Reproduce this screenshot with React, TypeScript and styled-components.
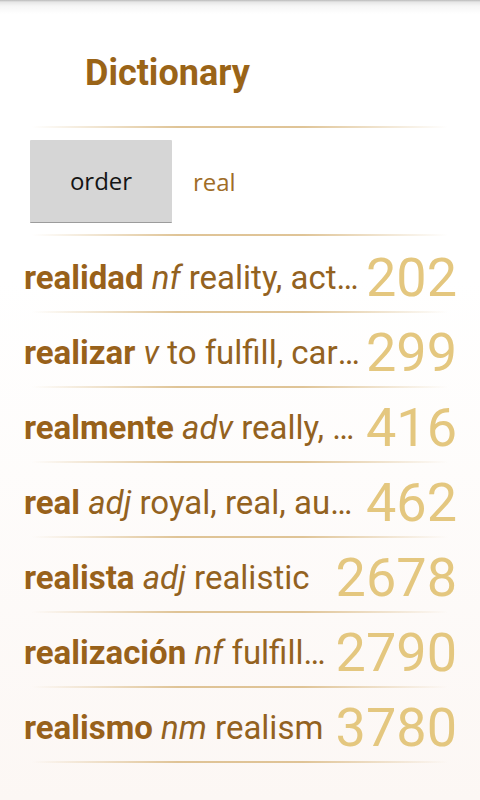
import React from "react";
import styled, { createGlobalStyle } from "styled-components";

const GlobalStyle = createGlobalStyle`
  html, body {
    margin: 0;
    padding: 0;
  }
  body {
    font-family: "Roboto", "Liberation Sans", sans-serif;
  }
`;

const Screen = styled.div`
  min-height: 800px;
  background: linear-gradient(
    to bottom,
    #b9b9b9 0px,
    #e6e6e6 2px,
    #f6f6f6 6px,
    #ffffff 14px,
    #ffffff 35%,
    #fcf7f4 100%
  );
`;

const Header = styled.header`
  height: 126px;
  padding: 19px 0 0 85px;
  box-sizing: border-box;
  display: flex;
  align-items: center;
`;

const Title = styled.h1`
  margin: 0;
  font-family: "Roboto", sans-serif;
  font-size: 36px;
  font-weight: 700;
  color: #9a6418;
`;

const Divider = styled.div<{ $gap?: number }>`
  height: 2px;
  margin: 0 32px ${(p) => p.$gap ?? 0}px;
  background: linear-gradient(
    to right,
    rgba(220, 190, 140, 0) 0%,
    rgba(220, 190, 140, 0.9) 35%,
    rgba(220, 190, 140, 0.9) 65%,
    rgba(220, 190, 140, 0) 100%
  );
`;

const SearchBar = styled.div`
  height: 106px;
  padding: 0 30px;
  display: flex;
  align-items: center;
  gap: 21px;
`;

const OrderButton = styled.button`
  width: 142px;
  height: 83px;
  border: none;
  border-bottom: 1px solid #9c9c9c;
  border-radius: 1px;
  background: #d6d6d6;
  font-family: "Open Sans", sans-serif;
  font-size: 24px;
  color: #141414;
  padding: 0;
`;

const Query = styled.span`
  font-family: "Open Sans", sans-serif;
  font-size: 24px;
  color: #a06d27;
`;

const Row = styled.div`
  height: 73px;
  padding: 6px 23px 0 24px;
  box-sizing: border-box;
  display: flex;
  align-items: center;
`;

const Entry = styled.div`
  flex: 1;
  min-width: 0;
  white-space: nowrap;
  overflow: hidden;
  text-overflow: ellipsis;
  font-size: 33px;
  color: #93621f;
`;

const Word = styled.b`
  font-weight: 700;
  color: #98611a;
`;

const Pos = styled.i`
  font-style: italic;
`;

const Rank = styled.span`
  flex: none;
  margin-left: 6px;
  font-size: 54px;
  font-weight: 400;
  color: #e4c77f;
`;

type Item = { word: string; pos: string; gloss: string; rank: number };

const items: Item[] = [
  { word: "realidad", pos: "nf", gloss: "reality, actuality", rank: 202 },
  { word: "realizar", pos: "v", gloss: "to fulfill, carry out", rank: 299 },
  { word: "realmente", pos: "adv", gloss: "really, actually", rank: 416 },
  { word: "real", pos: "adj", gloss: "royal, real, authentic", rank: 462 },
  { word: "realista", pos: "adj", gloss: "realistic", rank: 2678 },
  { word: "realización", pos: "nf", gloss: "fulfillment, realization", rank: 2790 },
  { word: "realismo", pos: "nm", gloss: "realism", rank: 3780 },
];

export default function App() {
  return (
    <Screen>
      <GlobalStyle />
      <Header>
        <Title>Dictionary</Title>
      </Header>
      <Divider />
      <SearchBar>
        <OrderButton>order</OrderButton>
        <Query>real</Query>
      </SearchBar>
      <Divider $gap={2} />
      {items.map((it) => (
        <React.Fragment key={it.rank}>
          <Row>
            <Entry>
              <Word>{it.word}</Word> <Pos>{it.pos}</Pos> {it.gloss}
            </Entry>
            <Rank>{it.rank}</Rank>
          </Row>
          <Divider />
        </React.Fragment>
      ))}
    </Screen>
  );
}
